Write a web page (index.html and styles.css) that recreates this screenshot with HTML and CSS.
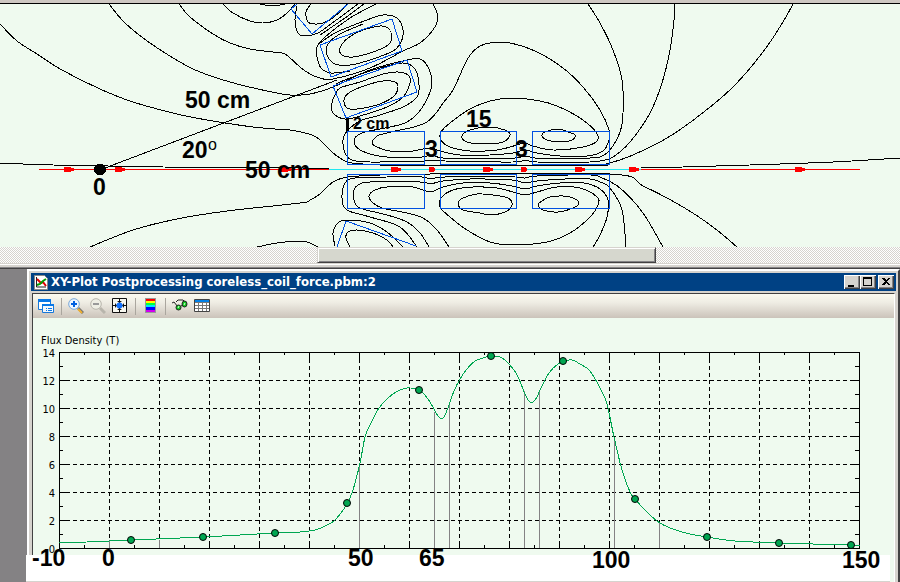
FILE: index.html
```html
<!DOCTYPE html>
<html lang="en">
<head>
<meta charset="utf-8">
<title>XY-Plot Postprocessing coreless_coil_force.pbm:2</title>
<link rel="stylesheet" href="styles.css">
</head>
<body>
<main class="app">
  <section class="field-pane">
    <svg class="field" viewBox="0 4 900 243" role="img" aria-label="Field map">
      <g id="flux" class="flux"></g>
      <g class="coil">
        <path d="M297 4L291 9L312 34L348 4M320 45L392 19L402 51L331 77ZM333 86L407 60L417 92L346 118ZM337 247L346 221L416 246"/>
        <path d="M347.500 131.500h77v33h-77zM440.500 131.500h76v33h-76zM532.500 131.500h77v33h-77zM347.500 174.500h77v34h-77zM440.500 174.500h76v34h-76zM532.500 174.500h77v34h-77z"/>
      </g>
      <path class="path-red" d="M39 169.500H329M641 169.500H860"/>
      <path class="path-cyan" d="M329 169.500H641"/>
      <g id="arrows" class="arrows"></g>
      <path class="ray" d="M105 168L337 80"/>
      <path class="gap-mark" d="M347 118V126L348 131"/>
      <circle cx="100" cy="169.500" r="6"/>
      <g class="note">
        <text x="185" y="108">50 cm</text>
        <text x="182" y="158">20</text>
        <text class="degree" x="208" y="150">o</text>
        <text x="245" y="178">50 cm</text>
        <text x="93" y="195">0</text>
        <text class="small" x="353" y="129">2 cm</text>
        <text x="425" y="157">3</text>
        <text x="466" y="127">15</text>
        <text x="515" y="157">3</text>
      </g>
    </svg>
    <div class="scroll"><div class="thumb"></div></div>
  </section>
  <section class="workspace">
    <article class="window">
      <header class="titlebar">
        <svg class="doc-icon" viewBox="0 0 14 16"><path fill="#fff" stroke="#888" d="M.5 1.500h10l3 3v11H.5z"/><path fill="none" stroke="#222" d="M2.500 3v10H12"/><path fill="none" stroke="#e00000" stroke-width="2" d="M3 5l4 4 2-1 3 4"/><path fill="none" stroke="#00a000" stroke-width="2" d="M3 11l3-1 3-3 3-2"/></svg>
        <h1>XY-Plot Postprocessing coreless_coil_force.pbm:2</h1>
        <div class="controls">
          <button type="button" aria-label="Minimize"><svg viewBox="0 0 12 10"><path d="M2 8h6v2H2z"/></svg></button>
          <button type="button" aria-label="Maximize"><svg viewBox="0 0 12 10"><path fill-rule="evenodd" d="M1 0h9v9H1zM2 2v6h7V2z"/></svg></button>
          <button type="button" class="close" aria-label="Close"><svg viewBox="0 0 12 10"><path d="M2 1h2l2 2 2-2h2L7 4.500 10 8H8L6 6 4 8H2l3-3.500z"/></svg></button>
        </div>
      </header>
      <div class="client">
        <nav class="toolbar" aria-label="Plot tools">
          <button type="button" aria-label="Copy window"><svg viewBox="0 0 16 16"><path fill="#fff" stroke="#1878d8" d="M.5 1.500h12v10H.5z"/><path fill="#0878e8" d="M0 1h13v3H0z"/><path fill="#f4f8fc" stroke="#1878d8" d="M4.500 6.500h11v8h-11z"/><path fill="#0878e8" d="M4 6h12v2H4zM8 10h1v1H8zM10 10h4v1h-4zM8 12h1v1H8zM10 12h4v1h-4z"/></svg></button>
          <i class="sep"></i>
          <button type="button" aria-label="Zoom in"><svg viewBox="0 0 16 16"><path stroke="#777" stroke-width="3" d="M10 10l5 5"/><path stroke="#f0b030" stroke-width="2" d="M10 11l4 4"/><circle cx="6" cy="6" r="5.300" fill="#eef6ff" stroke="#78a8d8"/><path fill="none" stroke="#0060e0" stroke-width="2" d="M6 3v6M3 6h6"/></svg></button>
          <button type="button" aria-label="Zoom out" disabled><svg viewBox="0 0 16 16"><path stroke="#b8b5ac" stroke-width="3" d="M10 10l5 5"/><circle cx="6" cy="6" r="5.300" fill="#eeeee4" stroke="#b8b5ac"/><path stroke="#999" stroke-width="2" d="M3 6h6"/></svg></button>
          <button type="button" aria-label="Fit view"><svg viewBox="0 0 16 16"><path fill="#f8f8f0" stroke="#111" d="M.5.5h14v14H.5z"/><path stroke="#111" d="M7.500 1v13M1 7.500h13"/><path fill="#111" d="M5 3h5L7.500 5zM5 12h5l-2.500-2zM3 5v5l2-2.500zM12 5v5l-2-2.500z"/><circle cx="7.500" cy="7.500" r="3" fill="#1070ff"/></svg></button>
          <i class="sep"></i>
          <button type="button" aria-label="Colour map"><svg viewBox="0 0 16 16"><path fill="#999" d="M3 0h11v15H3z"/><path fill="red" d="M4 1h9v2H4z"/><path fill="#ff0" d="M4 3h9v2H4z"/><path fill="#00ff40" d="M4 5h9v2H4z"/><path fill="#00e8f8" d="M4 7h9v2H4z"/><path fill="#00f" d="M4 9h9v3H4z"/><path fill="#d000f0" d="M4 12h9v2H4z"/></svg></button>
          <i class="sep"></i>
          <button type="button" aria-label="View values"><svg viewBox="0 0 16 16"><path fill="none" stroke="#222" d="M0 5l2-1 4 5M4 4l2-2 5 0 2 2"/><circle cx="6.500" cy="9.500" r="2.500" fill="#10c820" stroke="#222"/><ellipse cx="12.500" cy="6" rx="2.500" ry="3" fill="#10c820" stroke="#222"/><path stroke="#dfffdf" d="M6 10l1-2M12 7l1-2"/><path stroke="#222" d="M9 8l2-1"/></svg></button>
          <button type="button" aria-label="Table"><svg viewBox="0 0 16 16"><path fill="#fff" stroke="#444" d="M.5 1.500h15v12H.5z"/><path fill="#0080e8" d="M1 2h14v2H1z"/><path stroke="#777" d="M1 4.500h14M1 7.500h14M1 10.500h14M4.500 5v8M8.500 5v8M12.500 5v8"/></svg></button>
        </nav>
        <svg class="chart" viewBox="33 318 861 237" role="img" aria-label="Flux density plot">
          <g id="grid" class="grid"></g>
          <path class="frame" d="M59.500 352.500h800v196h-800z"/>
          <path id="ticks" class="frame"/>
          <path class="bounds" d="M109.500 541V548M159.500 540V548M359.500 463V548M434.500 412V548M449.500 405V548M524.500 391V548M539.500 391V548M614.500 437V548M659.500 522V548"/>
          <path id="curve" class="curve"/>
          <g id="markers" class="markers"></g>
          <text class="axis" x="41" y="344">Flux Density (T)</text>
          <g id="scale" class="axis scale"></g>
          <g class="note">
            <text x="32" y="566">-10</text>
            <text x="102" y="566">0</text>
            <text x="348" y="566">50</text>
            <text x="419" y="566">65</text>
            <text x="592" y="568">100</text>
            <text x="842" y="568">150</text>
          </g>
        </svg>
        <div class="strip"></div>
      </div>
    </article>
  </section>
</main>
<script src="plot.js"></script>
</body>
</html>
```
FILE: styles.css
```css
* { box-sizing: border-box; }
body { margin: 0; background: #848284; font-family: "Liberation Sans", sans-serif; }
.app { display: flex; flex-direction: column; min-height: 100vh; overflow: hidden; }
svg { display: block; }

.field-pane { background: #d6d3ce; border-top: 3px solid #cec7c2; border-bottom: 1px solid #424142; }
.field { width: 100%; height: auto; background: #effaef; border-top: 1px solid #000; shape-rendering: crispEdges; }
.flux path { fill: none; stroke: #000; }
.coil path { fill: none; stroke: #0050e0; }
.path-red { stroke: #f00; }
.path-cyan { stroke: #20e8f0; }
.arrows { fill: #f00; }
.ray { stroke: #000; }
.gap-mark { fill: none; stroke: #000; stroke-width: 3; }
.note { font-family: "Liberation Sans", sans-serif; font-size: 23px; font-weight: bold; }
.note .small { font-size: 16px; }
.note .degree { font-size: 16px; font-weight: normal; }

.scroll {
  height: 17px;
  border-bottom: 1px solid #d6d3ce;
  background: repeating-conic-gradient(#d6d3ce 0 25%, #fff 0 50%) 0 0 / 2px 2px;
}
.thumb {
  width: 37.700%;
  height: 16px;
  margin-left: 35.200%;
  background: #d6d7ce;
  border: 1px solid;
  border-color: #d6d3ce #424142 #424142 #d6d3ce;
  box-shadow: inset 1px 1px #fff, inset -1px -1px #848284;
}
.field-pane::after { content: ""; display: block; height: 2px; border-top: 1px solid #fff; border-bottom: 1px solid #848284; }

.workspace { flex: 1; display: flex; padding-left: 27px; background: #848284; }
.window {
  flex: 1;
  min-width: 0;
  display: flex;
  flex-direction: column;
  padding: 2px 2px 0;
  background: #d6d3ce;
  border: solid;
  border-width: 2px 2px 0;
  border-color: #fff #424142 #424142 #fff;
}
.titlebar { display: flex; align-items: center; height: 18px; padding: 0 2px 0 3px; background: #004184; }
.doc-icon { width: 14px; height: 16px; margin-right: 3px; }
h1 { flex: 1; margin: 0; color: #fff; font: bold 13px/18px "DejaVu Sans Condensed", "DejaVu Sans", sans-serif; white-space: nowrap; }
button { padding: 0; border: 0; background: none; }
.controls { display: flex; }
.controls button {
  width: 16px;
  height: 14px;
  padding: 2px;
  background: #d6d3ce;
  box-shadow: inset 1px 1px #fff, inset -1px -1px #424142, inset -2px -2px #848284;
}
.controls svg { width: 12px; height: 10px; shape-rendering: crispEdges; }
.controls .close { margin-left: 2px; }

.client { flex: 1; display: flex; flex-direction: column; margin: 2px 1px 0; background: #effaef; border: solid; border-width: 1px 1px 0; border-color: #424142 #fff #fff #424142; }
.toolbar { display: flex; align-items: center; gap: 6px; height: 24px; padding-left: 5px; background: linear-gradient(#fbfaf0, #efede4 35%, #cbc3ba); }
.toolbar button, .toolbar svg { width: 16px; height: 16px; }
.sep { width: 1px; height: 17px; margin-left: 1px; background: #aaa69e; }

.chart { width: 100%; height: auto; overflow: visible; position: relative; z-index: 1; shape-rendering: crispEdges; }
.grid path { stroke: #000; stroke-dasharray: 4 3; }
.frame { fill: none; stroke: #000; }
.bounds { stroke: #848284; }
.curve { fill: none; stroke: #00a651; }
.markers circle { fill: #00a651; stroke: #000; shape-rendering: geometricPrecision; }
.axis { font-family: "DejaVu Sans Condensed", "DejaVu Sans", sans-serif; font-size: 11px; }
.scale { text-anchor: end; }
.strip { flex: 1; min-height: 25px; margin: 0 4px 0 -7px; background: #fff; border-bottom: 1px solid #d6d3ce; }
```
FILE: plot.js
```js
const NS = "http://www.w3.org/2000/svg";

function add(parent, tag, attrs, text) {
  const el = document.createElementNS(NS, tag);
  for (const key in attrs) el.setAttribute(key, attrs[key]);
  if (text !== undefined) el.textContent = text;
  document.getElementById(parent).appendChild(el);
}

// Smooth path through "x y,x y,..." points; a trailing z closes the loop.
function smooth(spec) {
  const closed = spec.endsWith("z");
  const p = spec.replace("z", "").split(",").map(s => s.trim().split(" ").map(Number));
  const n = p.length;
  const at = i => closed ? p[(i + n) % n] : p[Math.max(0, Math.min(n - 1, i))];
  let d = "M" + p[0].join(" ");
  for (let i = 0; i < (closed ? n : n - 1); i++) {
    const a = at(i - 1), b = at(i), c = at(i + 1), e = at(i + 2);
    d += `C${b[0] + (c[0] - a[0]) / 6} ${b[1] + (c[1] - a[1]) / 6} ${c[0] - (e[0] - b[0]) / 6} ${c[1] - (e[1] - b[1]) / 6} ${c[0]} ${c[1]}`;
  }
  return d;
}

const fluxLines = [
  // far field, left
  "0 24,17 41,37 54,62 70,100 89,133 102,177 114,207 120,225 123,253 127,275 129,290 130,312 135,320 140,333 153,345 161,352 163,380 165,430 166,610 165",
  "109 4,125 23,150 43,180 62,200 72,230 82,267 91,290 95,310 94,333 87,370 70,407 60,420 59,428 67,432 82,428 97,418 113,405 123,385 128,362 133,354 141,362 151,387 157,422 157,431 155,443 158,480 159,515 158,525 156,535 158,562 159,590 158,600 157,610 150,620 132,623 113,622 80,613 50,600 23,588 4",
  "179 4,190 17,213 34,230 43,250 49,273 52,285 54,300 67,310 74,320 78,333 79,370 68,403 51,420 43,433 30,438 17,433 4",
  "223 4,233 13,250 21,263 23,277 20,287 13,295 4",
  "260 4,272 6,285 4",
  "0 163,53 165,163 167,300 168,329 168",
  "90 247,133 230,177 219,227 211,300 203,310 200,320 194,333 182,348 177,380 175,430 174,610 174,643 186,683 207,713 227,737 247",
  "257 247,277 243,300 241,310 243,318 247",
  // upper tilted coils
  "311 4,306 12,308 22,317 24,328 21,342 10,347 4",
  "297 6,295 20,298 33,305 36,318 33,335 21,358 4",
  "376 4,350 18,325 37,317 47,317 57,321 68,331 73,350 71",
  "364 4,345 18,320 35",
  "320 43,337 32,367 20,383 15,397 18,403 30,401 42,393 51,370 60,350 65,335 64,327 55,328 44,340 34,363 24",
  "340 48,342 55,353 57,373 52,388 45,392 37,388 28,380 26,363 30,348 38z",
  "344 100,347 108,357 109,377 105,393 97,398 88,395 82,383 81,367 85,350 92z",
  "410 83,408 75,398 72,383 74,360 82,340 88,335 95,332 103,333 113,345 119,360 116,387 107,403 97z",
  "336 84,350 78,380 68,403 63,415 69,419 85,417 97,403 107,380 115,360 121,347 131,343 140,345 153,352 160,370 162,425 161,432 160,445 161,513 162,525 160,537 162,590 162,600 161,613 157,630 142,650 113,662 83,670 50,674 20,675 4",
  // upper row
  "413 151,390 151,377 147,372 143,377 136,387 133,400 130,414 127,427 122,437 112,443 103,453 90,467 60,477 48,490 43,510 43,537 52,563 68,583 87,600 110,609 130,609 140,603 151,587 156,560 156,537 153,525 150,513 153,490 155,460 155,440 151,430 148,413 151",
  "441 132,441 140,450 147,470 151,497 150,517 145,525 143,533 146,553 150,583 147,597 141,596 132,580 118,557 106,540 101,513 98,490 101,470 109,450 123z",
  "462 136,467 142,485 144,503 142,510 135,505 130,488 127,470 130z",
  "542 136,547 140,560 142,572 140,575 135,568 132,558 129,545 132z",
  // far field, right
  "600 165,610 163,633 155,667 138,700 115,733 87,763 52,783 22,793 4",
  "641 168,683 167,750 165,833 162,900 158",
  // lower row
  "449 247,437 230,423 218,407 213,382 208,372 202,369 196,375 190,387 187,413 187,430 192,443 187,463 183,490 183,512 186,525 189,537 186,560 183,584 183,600 189,608 200,607 217,600 235,593 247",
  "429 247,420 233,407 222,387 215,360 208,354 200,354 190,358 185,370 182,420 182,430 184,443 181,470 179,512 180,525 183,537 181,565 179,590 179,600 182,610 188,622 210,626 247",
  "417 247,400 227,370 217,347 210,342 198,345 183,355 178,387 177,422 177,431 179,445 177,515 177,525 178,537 176,590 175,600 177,620 188,643 213,663 247",
  "440 207,441 198,453 190,473 187,497 188,513 192,525 195,537 192,557 187,580 188,597 197,598 205,590 217,570 233,547 242,513 245,490 242,467 230,450 217z",
  "458 203,463 210,480 213,490 215,505 212,512 205,508 198,493 195,477 194,463 198z",
  "538 205,543 210,558 212,573 208,579 203,573 198,563 196,550 197,542 201z",
  // lower tilted coil
  "335 246,333 233,338 223,347 220,370 223,387 232,403 247",
  "350 247,346 238,348 232,357 230,373 233,387 240,393 247"
];
fluxLines.forEach(s => add("flux", "path", { d: smooth(s) }));

[[64, 10], [115, 10], [281, 10], [391, 10], [429, 6], [483, 10], [521, 6], [575, 10], [629, 10], [795, 10]]
  .forEach(([x, w]) => add("arrows", "path", { d: `M${x} 167h4l${w - 4} 1v3l${4 - w} 1h-4z` }));

// Chart area: 5 cm is 25 units across, 1 T is 14 units up.
const L = 59, R = 859, T = 352, B = 548;
let ticks = "";
for (let i = 1; i < 32; i++) {
  const x = L + i * 25 + 0.5, len = i % 2 ? 3 : 7;
  ticks += `M${x} ${T}v${len}M${x} ${B}v-${len}`;
  if (i % 2 === 0) add("grid", "path", { d: `M${x} ${T}V${B}` });
}
for (let i = 1; i < 14; i++) {
  const y = B - i * 14 + 0.5, len = i % 2 ? 4 : 8;
  ticks += `M${L} ${y}h${len}M${R} ${y}h-${len}`;
  if (i % 2 === 0) add("grid", "path", { d: `M${L} ${y}H${R}` });
}
document.getElementById("ticks").setAttribute("d", ticks);
for (let v = 0; v <= 14; v += 2) add("scale", "text", { x: 55, y: B - v * 14 + 5 }, v);

document.getElementById("curve").setAttribute("d", smooth(
  "59 542,87 542,109 541,131 540,203 537,275 533,300 532,315 530,325 526,335 520,347 504,353 490,360 463,365 437,370 425,379 408,387 399,396 392,407 388,416 389,422 392,430 402,436 413,440 418,444 417,449 405,454 391,460 379,467 369,475 361,483 358,491 356,500 357,508 363,516 373,521 384,525 394,529 401,533 402,537 397,540 390,549 373,558 364,565 361,572 360,580 364,590 371,600 388,607 404,614 437,622 470,630 492,635 499,645 510,657 521,670 528,690 534,707 537,735 541,779 543,851 545,859 545"));
[[131, 540], [203, 537], [275, 533], [347, 503], [419, 390], [491, 356], [563, 361], [635, 499], [707, 537], [779, 543], [851, 545]]
  .forEach(([x, y]) => add("markers", "circle", { cx: x, cy: y, r: 3.5 }));
```
